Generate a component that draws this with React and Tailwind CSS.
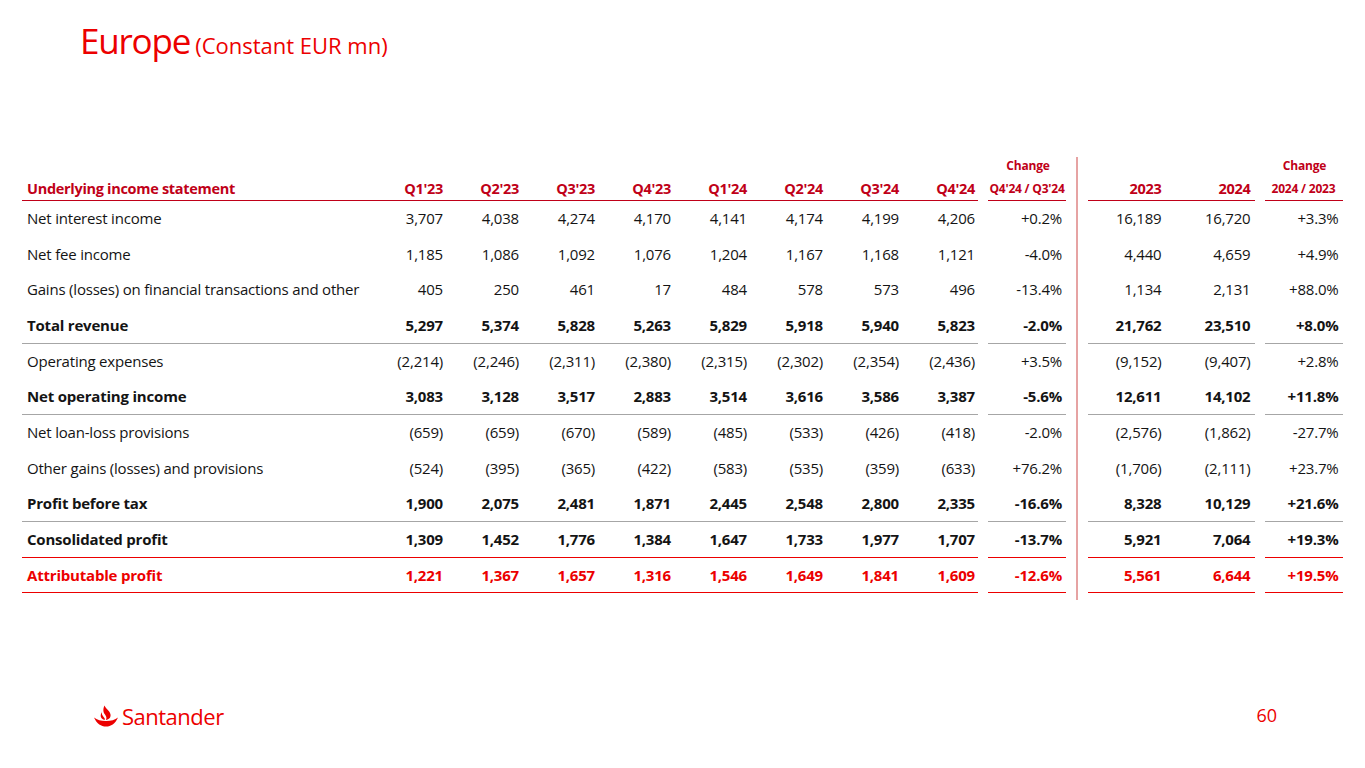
import React from 'react';

const FONT = { fontFamily: '"Open Sans", "Noto Sans", sans-serif' };

const rows = [
    { label: 'Net interest income', q: ['3,707', '4,038', '4,274', '4,170', '4,141', '4,174', '4,199', '4,206'], chg: '+0.2%', y: ['16,189', '16,720'], ychg: '+3.3%' },
    { label: 'Net fee income', q: ['1,185', '1,086', '1,092', '1,076', '1,204', '1,167', '1,168', '1,121'], chg: '-4.0%', y: ['4,440', '4,659'], ychg: '+4.9%' },
    { label: 'Gains (losses) on financial transactions and other', q: ['405', '250', '461', '17', '484', '578', '573', '496'], chg: '-13.4%', y: ['1,134', '2,131'], ychg: '+88.0%' },
    { label: 'Total revenue', bold: true, line: 'gray', q: ['5,297', '5,374', '5,828', '5,263', '5,829', '5,918', '5,940', '5,823'], chg: '-2.0%', y: ['21,762', '23,510'], ychg: '+8.0%' },
    { label: 'Operating expenses', q: ['(2,214)', '(2,246)', '(2,311)', '(2,380)', '(2,315)', '(2,302)', '(2,354)', '(2,436)'], chg: '+3.5%', y: ['(9,152)', '(9,407)'], ychg: '+2.8%' },
    { label: 'Net operating income', bold: true, line: 'gray', q: ['3,083', '3,128', '3,517', '2,883', '3,514', '3,616', '3,586', '3,387'], chg: '-5.6%', y: ['12,611', '14,102'], ychg: '+11.8%' },
    { label: 'Net loan-loss provisions', q: ['(659)', '(659)', '(670)', '(589)', '(485)', '(533)', '(426)', '(418)'], chg: '-2.0%', y: ['(2,576)', '(1,862)'], ychg: '-27.7%' },
    { label: 'Other gains (losses) and provisions', q: ['(524)', '(395)', '(365)', '(422)', '(583)', '(535)', '(359)', '(633)'], chg: '+76.2%', y: ['(1,706)', '(2,111)'], ychg: '+23.7%' },
    { label: 'Profit before tax', bold: true, line: 'gray', q: ['1,900', '2,075', '2,481', '1,871', '2,445', '2,548', '2,800', '2,335'], chg: '-16.6%', y: ['8,328', '10,129'], ychg: '+21.6%' },
    { label: 'Consolidated profit', bold: true, line: 'red', q: ['1,309', '1,452', '1,776', '1,384', '1,647', '1,733', '1,977', '1,707'], chg: '-13.7%', y: ['5,921', '7,064'], ychg: '+19.3%' },
    { label: 'Attributable profit', bold: true, red: true, line: 'red', q: ['1,221', '1,367', '1,657', '1,316', '1,546', '1,649', '1,841', '1,609'], chg: '-12.6%', y: ['5,561', '6,644'], ychg: '+19.5%' },
];

const quarters = ["Q1'23", "Q2'23", "Q3'23", "Q4'23", "Q1'24", "Q2'24", "Q3'24", "Q4'24"];

function lineClass(line) {
    if (line === 'gray') return 'border-b border-[#a6a6a6]';
    if (line === 'red') return 'border-b-[1.5px] border-[#ec0000]';
    return 'border-b border-transparent';
}

function rowText(r) {
    const weight = r.bold ? 'font-bold' : 'font-normal';
    const color = r.red ? 'text-[#ec0000]' : 'text-[#141414]';
    return `${weight} ${color}`;
}

function ChangeHead({ sub }) {
    return (
        <div className="flex flex-col items-center leading-[20px] text-[12px] font-bold tracking-[-0.2px] text-[#c00018]">
            <span className="pl-[2px]">Change</span>
            <span className="mt-[3px] whitespace-nowrap">{sub}</span>
        </div>
    );
}

function LeftBlock() {
    return (
        <div className="flex flex-col">
            {/* header */}
            <div className="flex h-[46px] items-end gap-[10px]">
                <div className="flex w-[956px] items-end border-b-[1.5px] border-[#c00018] text-[14.5px] font-bold leading-[22px] tracking-[-0.3px] text-[#c00018]">
                    <div className="w-[348px] pl-[5px]">Underlying income statement</div>
                    {quarters.map((q) => (
                        <div key={q} className="w-[76px] pr-[3px] text-right">{q}</div>
                    ))}
                </div>
                <div className="w-[78px] border-b-[1.5px] border-[#c00018] pb-px">
                    <ChangeHead sub="Q4'24 / Q3'24" />
                </div>
            </div>
            {rows.map((r) => (
                <div key={r.label} className={`flex h-[35.67px] gap-[10px] text-[15px] tracking-[-0.2px] ${rowText(r)}`}>
                    <div className={`flex w-[956px] items-center ${lineClass(r.line)}`}>
                        <div className="w-[348px] whitespace-nowrap pl-[5px]">{r.label}</div>
                        {r.q.map((v, i) => (
                            <div key={i} className="w-[76px] pr-[3px] text-right">{v}</div>
                        ))}
                    </div>
                    <div className={`flex w-[78px] items-center justify-end pr-[4px] ${lineClass(r.line)}`}>{r.chg}</div>
                </div>
            ))}
        </div>
    );
}

function RightBlock() {
    return (
        <div className="flex flex-col">
            <div className="flex h-[46px] items-end gap-[10px]">
                <div className="flex w-[167px] items-end border-b-[1.5px] border-[#c00018] text-[14.5px] font-bold leading-[22px] tracking-[-0.3px] text-[#c00018]">
                    <div className="w-[78px] pr-[4px] text-right">2023</div>
                    <div className="w-[89px] pr-[4px] text-right">2024</div>
                </div>
                <div className="w-[78px] border-b-[1.5px] border-[#c00018] pb-px">
                    <ChangeHead sub="2024 / 2023" />
                </div>
            </div>
            {rows.map((r) => (
                <div key={r.label} className={`flex h-[35.67px] gap-[10px] text-[15px] tracking-[-0.2px] ${rowText(r)}`}>
                    <div className={`flex w-[167px] items-center ${lineClass(r.line)}`}>
                        <div className="w-[78px] pr-[4px] text-right">{r.y[0]}</div>
                        <div className="w-[89px] pr-[4px] text-right">{r.y[1]}</div>
                    </div>
                    <div className={`flex w-[78px] items-center justify-end pr-[4px] ${lineClass(r.line)}`}>{r.ychg}</div>
                </div>
            ))}
        </div>
    );
}

function Flame() {
    return (
        <svg width="26" height="22" viewBox="0 0 26 22">
            {/* base */}
            <path d="M1 12.5 C4 19 8 21.5 13 21.5 C18 21.5 22 19 25 12.5 C22 15 18 16 13 16 C8 16 4 15 1 12.5 Z" fill="#ec0000" />
            {/* flame */}
            <path d="M11.5 0.5 C13 4 17 6 17.5 9.5 C18 12.5 16 14.5 13 15 C13.8 13 13.5 11.5 12 9.5 C10.5 7.5 9.5 5 11.5 0.5 Z" fill="#ec0000" />
            <path d="M9 5.5 C8 8.5 9.5 10.5 11 12.5 C12 13.8 12 14.5 11.5 15 C9 14.3 7.5 12.8 7.7 10.5 C7.9 8.3 9 7 9 5.5 Z" fill="#ec0000" />
        </svg>
    );
}

export default function App() {
    return (
        <div className="relative h-[768px] w-[1365px] overflow-hidden bg-white" style={FONT}>
            <div className="pl-[80px] pt-[23px] leading-none text-[#ec0000]">
                <span className="text-[35px] tracking-[-1.2px]">Europe</span>
                <span className="ml-[5px] text-[22px]">(Constant EUR mn)</span>
            </div>
            <div className="mt-[97px] flex items-start pl-[22px]">
                <LeftBlock />
                <div className="ml-[10px] mr-[10px] mt-[2px] h-[443px] w-[1.5px] bg-[#e6a3a3]" />
                <RightBlock />
            </div>
            <div className="mt-[102px] flex items-center justify-between pl-[93px] pr-[88px]">
                <div className="flex items-center gap-[3px]">
                    <Flame />
                    <span className="text-[22px] leading-none tracking-[-0.5px] text-[#ec0000]">Santander</span>
                </div>
                <span className="text-[18px] text-[#ec0000]">60</span>
            </div>
        </div>
    );
}
